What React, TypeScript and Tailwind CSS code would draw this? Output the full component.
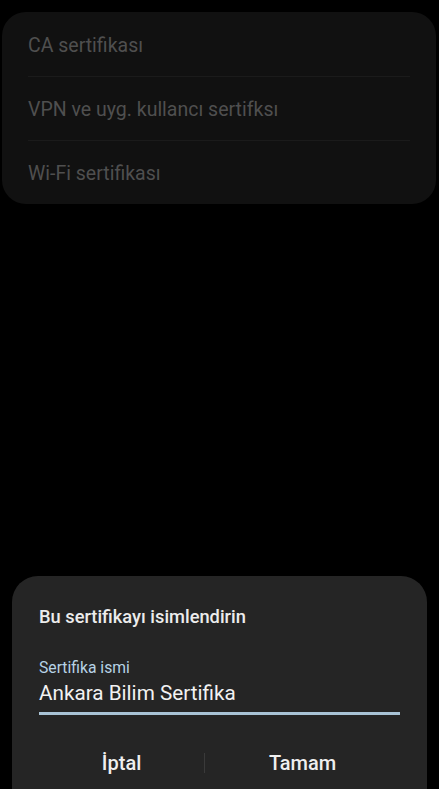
export default function App() {
  const font = { fontFamily: "Roboto, 'Noto Sans', sans-serif" };
  return (
    <div className="w-[439px] h-[789px] bg-black overflow-hidden flex flex-col" style={font}>
      <div className="mt-[12px] ml-[2px] w-[434px] h-[192px] rounded-[24px] bg-[#111111] flex flex-col px-[26px]">
        <div className="h-[65px] pt-[3px] flex items-center text-[19.5px] text-[#4f4f4f] border-b border-[#1b1b1b]">CA sertifikası</div>
        <div className="h-[64px] pt-[3px] flex items-center text-[19.5px] text-[#4f4f4f] border-b border-[#1b1b1b]">VPN ve uyg. kullancı sertifksı</div>
        <div className="h-[62px] pt-[3px] flex items-center text-[19.5px] text-[#4f4f4f]">Wi-Fi sertifikası</div>
      </div>
      <div className="mt-auto ml-[12px] w-[415px] h-[213px] rounded-t-[26px] bg-[#252525] flex flex-col px-[27px]">
        <div className="mt-[29px] text-[18.3px] font-medium text-[#ececec] leading-[24px]">Bu sertifikayı isimlendirin</div>
        <div className="mt-[29px] text-[15.7px] text-[#b7d3e6] leading-[20px]">Sertifika ismi</div>
        <div className="mt-[1px] text-[20.7px] text-[#f2f2f2] leading-[28px]">Ankara Bilim Sertifika</div>
        <div className="mt-[5px] w-[361px] h-[3px] bg-[#a9c3d6]" />
        <div className="mt-[34px] flex items-center h-[28px]">
          <div className="w-[166px] text-center text-[20px] font-medium text-[#efefef]">İptal</div>
          <div className="w-[1px] h-[20px] bg-[#3a3a3a]" />
          <div className="w-[196px] text-center text-[20px] font-medium text-[#efefef]">Tamam</div>
        </div>
      </div>
    </div>
  );
}
